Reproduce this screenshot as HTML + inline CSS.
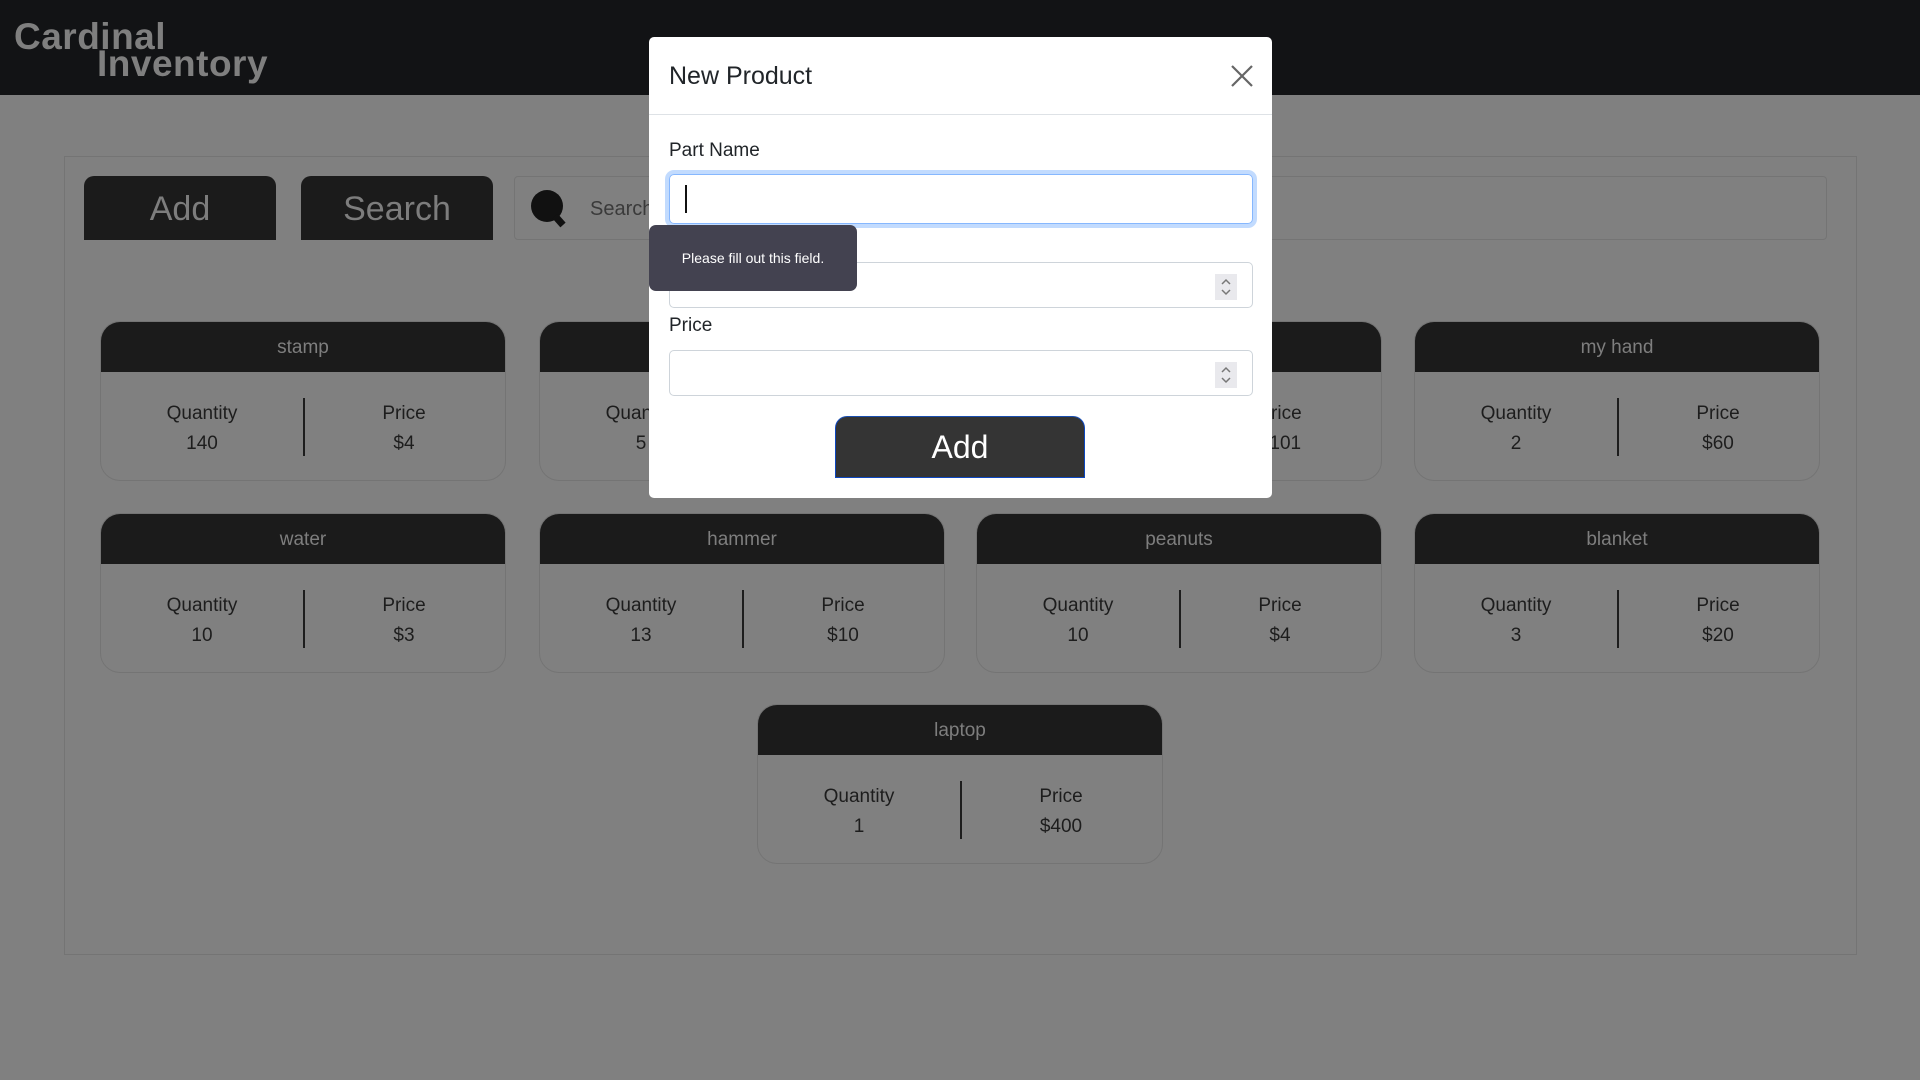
<!DOCTYPE html>
<html><head><meta charset="utf-8"><style>
*{box-sizing:border-box;margin:0;padding:0}
body{width:1920px;height:1080px;background:#808080;font-family:"Liberation Sans",sans-serif;position:relative;overflow:hidden}
.hdr{position:absolute;left:0;top:0;width:1920px;height:95px;background:#121315}
.l1,.l2{position:absolute;color:#7f7f7f;font-weight:bold;font-size:37px;letter-spacing:0.5px}
.l1{left:14px;top:16px}.l2{left:97px;top:43px}
.cont{position:absolute;left:64px;top:156px;width:1793px;height:799px;border:1px solid #747474}
.btn{position:absolute;top:176px;width:192px;height:64px;background:#1b1b1b;border-radius:10px 10px 0 0;color:#7d7d7d;font-size:34px;text-align:center;line-height:66px}
.srch{position:absolute;left:514px;top:176px;width:1313px;height:64px;border:1px solid #747474;border-radius:4px}
.card{position:absolute;width:406px;height:160px;border:1px solid #747474;border-radius:20px;overflow:hidden}
.ch{height:50px;background:#1b1b1b;color:#7e7e7e;font-size:19px;text-align:center;line-height:52px}
.cb{display:flex;height:110px;position:relative}
.cb div{flex:1;text-align:center;color:#1d1d1d;font-size:19px;line-height:30px;padding-top:27px}
.cb:after{content:"";position:absolute;left:202px;top:26px;width:2px;height:58px;background:#1d1d1d}
.modal{position:absolute;left:649px;top:37px;width:623px;height:461px;background:#fff;border-radius:5px}
.mt{position:absolute;left:20px;top:25px;font-size:25px;color:#212529}
.mline{position:absolute;left:0;top:77px;width:623px;height:1px;background:#dee2e6}
.lab{position:absolute;left:20px;font-size:19px;color:#212529}
.inp{position:absolute;left:20px;width:584px;border:1px solid #ced4da;border-radius:5px}
.spin{position:absolute;right:15px;top:11px;width:22px;height:26px;background:#e9e9ed}
</style></head><body>
<div class="hdr"><div class="l1">Cardinal</div><div class="l2">Inventory</div></div>
<div class="cont"></div>
<div class="btn" style="left:84px">Add</div>
<div class="btn" style="left:301px">Search</div>
<div class="srch"><svg style="position:absolute;left:14px;top:11px" width="42" height="42" viewBox="0 0 42 42"><circle cx="18" cy="18" r="16" fill="#111"/><path d="M26 28 L34 37" stroke="#111" stroke-width="7"/></svg><span style="position:absolute;left:75px;top:21px;color:#3a3a3a;font-size:20px">Search</span></div>

<div class="card" style="left:100px;top:321px"><div class="ch">stamp</div><div class="cb"><div>Quantity<br>140</div><div>Price<br>$4</div></div></div>
<div class="card" style="left:539px;top:321px"><div class="ch">item</div><div class="cb"><div>Quantity<br>5</div><div>Price<br>$5</div></div></div>
<div class="card" style="left:976px;top:321px"><div class="ch">item</div><div class="cb"><div>Quantity<br>1</div><div>Price<br>$101</div></div></div>
<div class="card" style="left:1414px;top:321px"><div class="ch">my hand</div><div class="cb"><div>Quantity<br>2</div><div>Price<br>$60</div></div></div>
<div class="card" style="left:100px;top:513px"><div class="ch">water</div><div class="cb"><div>Quantity<br>10</div><div>Price<br>$3</div></div></div>
<div class="card" style="left:539px;top:513px"><div class="ch">hammer</div><div class="cb"><div>Quantity<br>13</div><div>Price<br>$10</div></div></div>
<div class="card" style="left:976px;top:513px"><div class="ch">peanuts</div><div class="cb"><div>Quantity<br>10</div><div>Price<br>$4</div></div></div>
<div class="card" style="left:1414px;top:513px"><div class="ch">blanket</div><div class="cb"><div>Quantity<br>3</div><div>Price<br>$20</div></div></div>
<div class="card" style="left:757px;top:704px"><div class="ch">laptop</div><div class="cb"><div>Quantity<br>1</div><div>Price<br>$400</div></div></div>

<div class="modal">
<div class="mt">New Product</div>
<svg style="position:absolute;left:582px;top:28px" width="22" height="22" viewBox="0 0 22 22"><path d="M1 1L21 21M21 1L1 21" stroke="#666" stroke-width="2.2"/></svg>
<div class="mline"></div>
<div class="lab" style="top:103px">Part Name</div>
<div class="inp" style="top:137px;height:50px;border:1px solid #86b7fe;box-shadow:0 0 0 4px #c2dbfe"><div style="position:absolute;left:15px;top:10px;width:2px;height:28px;background:#111"></div></div>
<div class="inp" style="top:225px;height:46px"><div class="spin"><svg width="22" height="26" viewBox="0 0 22 26"><path d="M7 10L11 6L15 10M7 16L11 20L15 16" fill="none" stroke="#777" stroke-width="1.5"/></svg></div></div>
<div class="lab" style="top:278px">Price</div>
<div class="inp" style="top:313px;height:46px"><div class="spin"><svg width="22" height="26" viewBox="0 0 22 26"><path d="M7 10L11 6L15 10M7 16L11 20L15 16" fill="none" stroke="#777" stroke-width="1.5"/></svg></div></div>
<div style="position:absolute;left:186px;top:379px;width:250px;height:62px;background:#343434;border-radius:12px 12px 0 0;border:1px solid #0d47c0;border-top-color:#1a4fb0;color:#fff;font-size:32px;text-align:center;line-height:60px">Add</div>
<div style="position:absolute;left:0;top:188px;width:208px;height:66px;background:#434250;border-radius:7px;color:#fff;font-size:14px;line-height:66px;text-align:center">Please fill out this field.</div>
</div>
</body></html>
